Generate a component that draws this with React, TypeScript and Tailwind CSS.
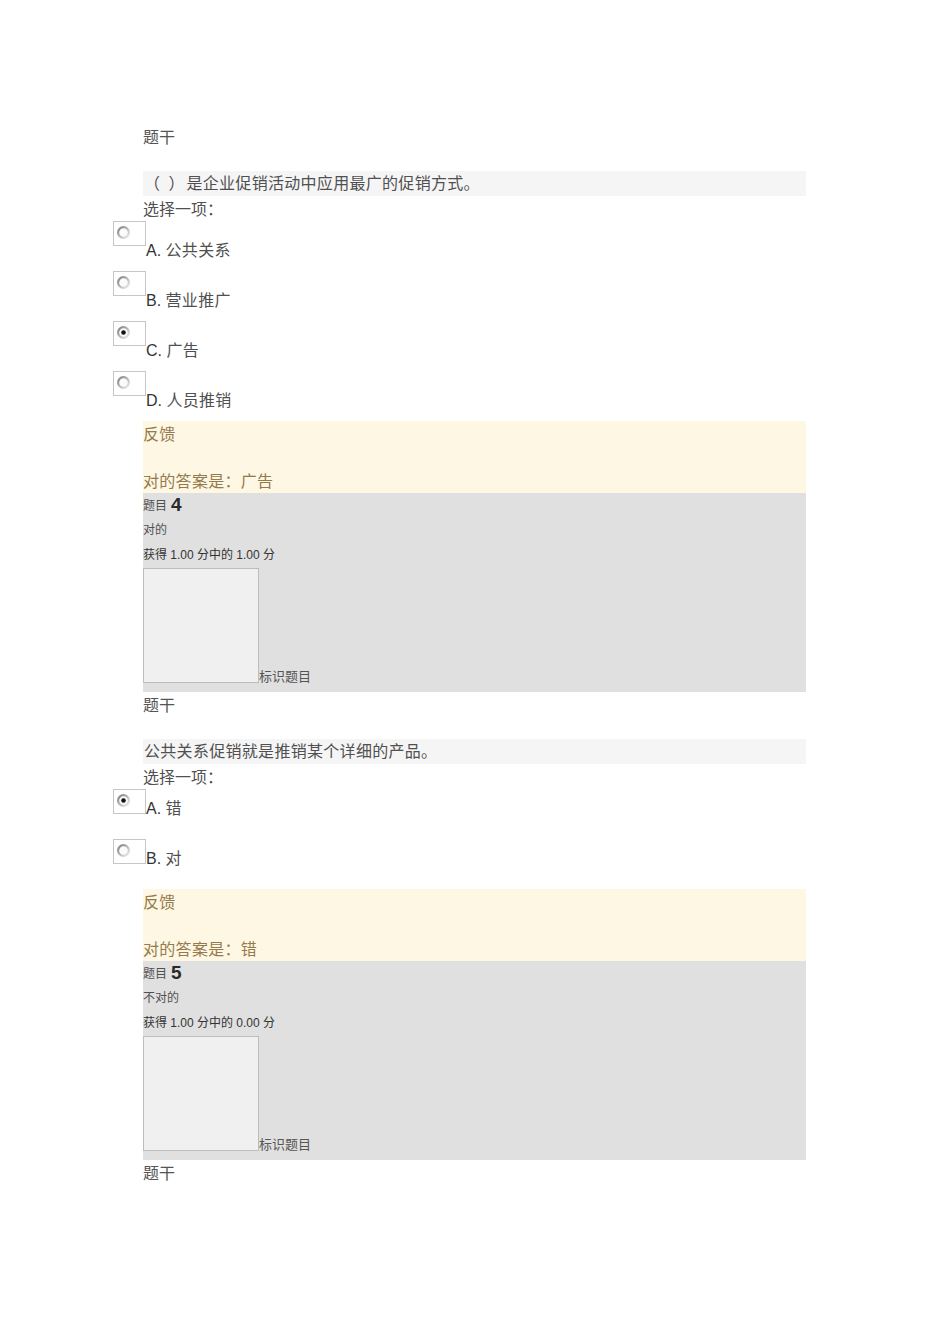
import { useId } from "react";

const font = "font-['Liberation_Sans','Noto_Sans_CJK_SC',sans-serif]";

type Option = { key: string; text: string; checked?: boolean };

type Question = {
  blank?: boolean;
  prompt: string;
  options: Option[];
  labelOffset: string;
  answer: string;
  number: number;
  status: string;
  score: string;
};

const questions: Question[] = [
  {
    blank: true,
    prompt: "是企业促销活动中应用最广的促销方式。",
    options: [
      { key: "A", text: "公共关系" },
      { key: "B", text: "营业推广" },
      { key: "C", text: "广告", checked: true },
      { key: "D", text: "人员推销" },
    ],
    labelOffset: "mt-[21px]",
    answer: "广告",
    number: 4,
    status: "对的",
    score: "获得 1.00 分中的 1.00 分",
  },
  {
    prompt: "公共关系促销就是推销某个详细的产品。",
    options: [
      { key: "A", text: "错", checked: true },
      { key: "B", text: "对" },
    ],
    labelOffset: "mt-[11px]",
    answer: "错",
    number: 5,
    status: "不对的",
    score: "获得 1.00 分中的 0.00 分",
  },
];

function RadioMark({ checked }: { checked?: boolean }) {
  const id = useId();
  return (
    <svg width="15" height="15" viewBox="0 0 15 15" className="ml-[2px] mt-[3px]">
      <defs>
        <linearGradient id={id} x1="0" y1="0" x2="1" y2="1">
          <stop offset="0" stopColor="#7e7e7e" />
          <stop offset="0.55" stopColor="#bdbdbd" />
          <stop offset="1" stopColor="#ececec" />
        </linearGradient>
      </defs>
      <circle cx="7.5" cy="7.5" r="5.4" fill="#fbfbfb" stroke={`url(#${id})`} strokeWidth="2.2" />
      {checked && <circle cx="7.5" cy="7.5" r="2.3" fill="#111" />}
    </svg>
  );
}

function Stem() {
  return <div className="pt-[2px] text-[16px] leading-[24px] text-[#555]">题干</div>;
}

function QuestionBlock({ q }: { q: Question }) {
  return (
    <>
      <Stem />
      <div className="mt-[21px] h-[25px] bg-[#f5f5f6] pl-[1px] text-[16px] leading-[25px] tracking-[0.3px] text-[#505050]">
        {q.blank && <span className="tracking-[2px]">（ ）</span>}
        {q.prompt}
      </div>
      <div className="pt-[2px] text-[16px] leading-[23px] text-[#505050]">选择一项：</div>
      <div className="-ml-[30px] flex flex-col">
        {q.options.map((o) => (
          <div key={o.key} className="flex h-[50px] items-start">
            <div className="h-[25px] w-[33px] shrink-0 border border-[#c6c6c6] bg-white">
              <RadioMark checked={o.checked} />
            </div>
            <span className={`${q.labelOffset} text-[16px] leading-[18px] text-[#333]`}>
              {o.key}. <span className="tracking-[0.3px] text-[#505050]">{o.text}</span>
            </span>
          </div>
        ))}
      </div>
      <div className="h-[72px] bg-[#fdf7e4] text-[16px] tracking-[0.3px] text-[#957a4c]">
        <div className="pt-[2px] leading-[24px]">反馈</div>
        <div className="mt-[23px] leading-[24px]">对的答案是：{q.answer}</div>
      </div>
      <div className="h-[199px] bg-[#e0e0e0] text-[12px] text-[#333]">
        <div className="flex h-[25px] items-center gap-[4px]">
          <span className="text-[#505050]">题目</span>
          <span className="text-[19px] font-bold text-[#2a2a2a]">{q.number}</span>
        </div>
        <div className="leading-[25px] text-[#505050]">{q.status}</div>
        <div className="leading-[25px]">{q.score}</div>
        <div className="flex items-end">
          <div className="h-[115px] w-[116px] border border-[#bdbdbd] bg-[#f0f0f0]" />
          <span className="text-[13px] leading-[13px] text-[#555]">标识题目</span>
        </div>
      </div>
    </>
  );
}

export default function App() {
  return (
    <div lang="zh-CN" className={`${font} min-h-[1344px] bg-white pt-[124px]`}>
      <div className="ml-[143px] flex w-[663px] flex-col">
        {questions.map((q) => (
          <QuestionBlock key={q.number} q={q} />
        ))}
        <Stem />
      </div>
    </div>
  );
}
